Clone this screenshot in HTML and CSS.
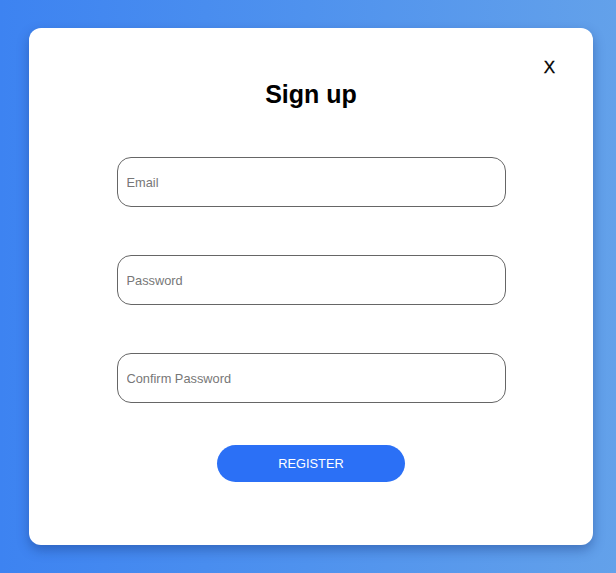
FILE: index.html
```
<!DOCTYPE html>
<html>
<head>
<meta charset="utf-8">
<link rel="stylesheet" href="styles.css">
</head>
<body>
<div class="page">
  <div class="card">
    <button class="close">X</button>
    <h1 class="title">Sign up</h1>
    <form class="form">
      <input class="field" type="email" placeholder="Email">
      <input class="field" type="password" placeholder="Password">
      <input class="field" type="password" placeholder="Confirm Password">
      <button class="register" type="button">REGISTER</button>
    </form>
  </div>
</div>
</body>
</html>
```
FILE: styles.css
```
html, body {
  margin: 0;
  padding: 0;
}
body {
  width: 616px;
  height: 573px;
  overflow: hidden;
  background: linear-gradient(90deg, #3d83f1 0%, #4f92ee 50%, #63a1ea 100%);
  font-family: "Liberation Sans", Arial, sans-serif;
}
.page {
  padding: 28px 0 0 29px;
}
.card {
  position: relative;
  box-sizing: border-box;
  width: 564px;
  height: 517px;
  background: #fff;
  border-radius: 12px;
  box-shadow: 0 5px 12px rgba(20, 50, 120, 0.4);
  padding-top: 52px;
  display: flex;
  flex-direction: column;
  align-items: center;
}
.close {
  position: absolute;
  top: 30px;
  right: 38px;
  background: none;
  border: none;
  padding: 0;
  font-family: "Liberation Sans", Arial, sans-serif;
  font-size: 17px;
  line-height: 20px;
  color: #000;
  -webkit-text-stroke: 0.3px #000;
  cursor: pointer;
}
.title {
  margin: 0;
  font-size: 25px;
  line-height: 29px;
  font-weight: bold;
  color: #000;
}
.form {
  margin-top: 48px;
  display: flex;
  flex-direction: column;
  align-items: center;
  gap: 48px;
}
.field {
  box-sizing: border-box;
  width: 389px;
  height: 50px;
  margin: 0;
  border: 1px solid #666;
  border-radius: 14px;
  padding: 0 9px;
  font-family: "Liberation Sans", Arial, sans-serif;
  font-size: 12.8px;
  color: #333;
  outline: none;
}
.field::placeholder {
  color: #777;
}
.register {
  margin-top: -6px;
  width: 188px;
  height: 37px;
  border: none;
  border-radius: 19px;
  background: #2b70f6;
  color: #fff;
  font-family: "Liberation Sans", Arial, sans-serif;
  font-size: 12.8px;
  cursor: pointer;
}
```
